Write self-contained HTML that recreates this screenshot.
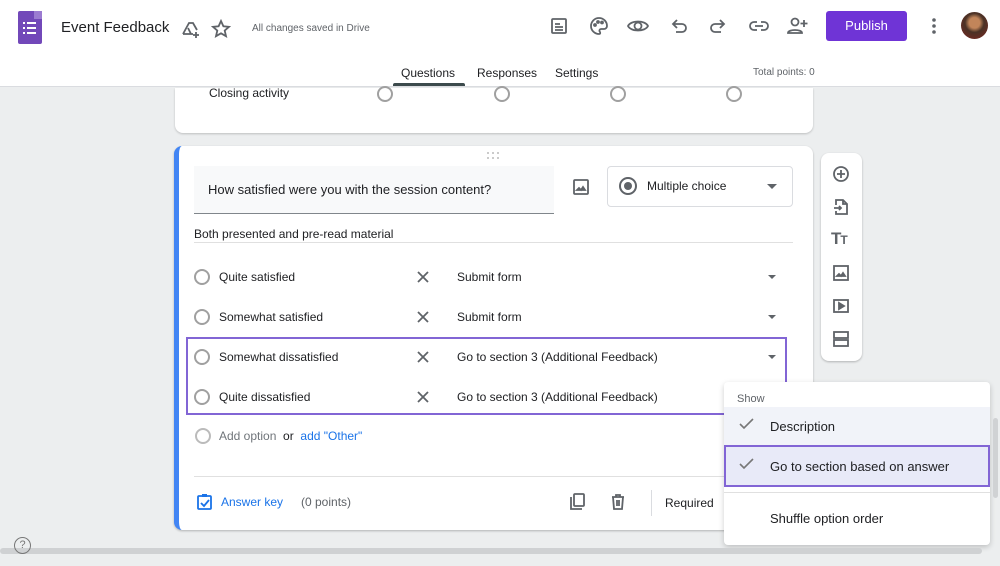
<!DOCTYPE html>
<html><head><meta charset="utf-8"><style>
*{box-sizing:border-box;margin:0;padding:0}
body{width:1000px;height:566px;overflow:hidden;background:#eceeef;font-family:"Liberation Sans",Arial,sans-serif;color:#202124;position:relative;font-size:13px}
.abs{position:absolute}
.radio{position:absolute;width:16px;height:16px;border:2px solid #a0a0a0;border-radius:50%}
svg{position:absolute}
.ic{fill:none;stroke:#5f6368;stroke-width:1.8}
</style></head><body>
<div class="abs" style="left:0;top:0;width:1000px;height:87px;background:#fff;border-bottom:1px solid #dadce0"></div>
<div class="abs" style="left:18px;top:11px;width:24px;height:33px;background:#7248b9;border-radius:2px"></div>
<div class="abs" style="left:34px;top:11px;width:8px;height:8px;background:#9b7bd1"></div>
<svg style="left:22px;top:21px" width="16" height="14"><g fill="#fff"><rect x="1" y="1" width="2" height="2"/><rect x="5" y="1" width="9" height="2"/><rect x="1" y="6" width="2" height="2"/><rect x="5" y="6" width="9" height="2"/><rect x="1" y="11" width="2" height="2"/><rect x="5" y="11" width="9" height="2"/></g></svg>
<div class="abs" style="left:61px;top:19px;font-size:15px">Event Feedback</div>
<svg style="left:180px;top:19px" width="22" height="20" class="ic"><path d="M3 15 L9 4 L13 4 L17 11 M3 15 L13 15 M8 9 L11 15"/><path d="M16 13v6M13 16h6"/></svg>
<svg style="left:211px;top:19px" width="20" height="20" class="ic"><path d="M10 2l2.4 5.3 5.6.5-4.3 3.8 1.3 5.6L10 14.3 5 17.2l1.3-5.6L2 7.8l5.6-.5z"/></svg>
<div class="abs" style="left:252px;top:23px;font-size:10px;color:#5f6368">All changes saved in Drive</div>
<svg style="left:549px;top:16px" width="20" height="20" class="ic"><rect x="3" y="3" width="14" height="14" rx="1"/><path d="M6 8h5M6 11h8M6 14h8"/></svg>
<svg style="left:589px;top:16px" width="20" height="20" class="ic"><path d="M10 2a8 8 0 1 0 0 16c1.5 0 1.5-1.5.7-2.5-.7-1 0-2.5 1.3-2.5H15a3 3 0 0 0 3-3c0-4.5-3.6-8-8-8z"/><circle cx="6" cy="9" r="1"/><circle cx="9" cy="6" r="1"/><circle cx="13" cy="6.5" r="1"/></svg>
<svg style="left:627px;top:16px" width="22" height="20" class="ic"><path d="M1 10c3-6 17-6 20 0-3 6-17 6-20 0z"/><circle cx="11" cy="10" r="3.5"/></svg>
<svg style="left:669px;top:16px" width="20" height="20" class="ic"><path d="M5 8h8a4 4 0 0 1 0 8H7M8 4L4 8l4 4"/></svg>
<svg style="left:708px;top:16px" width="20" height="20" class="ic"><path d="M15 8H7a4 4 0 0 0 0 8h6M12 4l4 4-4 4"/></svg>
<svg style="left:748px;top:16px" width="22" height="20" class="ic"><path d="M9 6H6a4 4 0 0 0 0 8h3M13 6h3a4 4 0 0 1 0 8h-3M7 10h8"/></svg>
<svg style="left:787px;top:16px" width="22" height="20" class="ic"><circle cx="8" cy="6" r="3.5"/><path d="M1 17c0-4 14-4 14 0zM17 4v7M13.5 7.5h7"/></svg>
<div class="abs" style="left:826px;top:11px;width:81px;height:30px;background:#6f34d6;border-radius:3px;color:#fff;font-size:13px;text-align:center;line-height:30px">Publish</div>
<svg style="left:928px;top:16px" width="12" height="20"><g fill="#5f6368"><circle cx="6" cy="4" r="1.8"/><circle cx="6" cy="10" r="1.8"/><circle cx="6" cy="16" r="1.8"/></g></svg>
<div class="abs" style="left:961px;top:12px;width:27px;height:27px;border-radius:50%;background:radial-gradient(circle at 50% 40%,#c2855a 0 25%,#4a3226 45%,#6b2a22 80%)"></div>
<div class="abs" style="left:401px;top:66px;font-size:12px">Questions</div>
<div class="abs" style="left:393px;top:83px;width:72px;height:3px;background:#3c4a4c;border-radius:2px 2px 0 0"></div>
<div class="abs" style="left:477px;top:66px;font-size:12px">Responses</div>
<div class="abs" style="left:555px;top:66px;font-size:12px">Settings</div>
<div class="abs" style="left:753px;top:67px;font-size:10px;color:#5f6368">Total points: 0</div>
<div class="abs" style="left:175px;top:88px;width:638px;height:45px;background:#fff;border-radius:0 0 8px 8px;box-shadow:0 1px 2px rgba(0,0,0,.2)"></div>
<div class="abs" style="left:209px;top:86px;font-size:12px">Closing activity</div>
<div class="radio" style="left:377px;top:86px"></div>
<div class="radio" style="left:494px;top:86px"></div>
<div class="radio" style="left:610px;top:86px"></div>
<div class="radio" style="left:726px;top:86px"></div>
<div class="abs" style="left:174px;top:146px;width:639px;height:384px;background:#fff;border-radius:8px;border-left:5px solid #4285f4;box-shadow:0 1px 2px rgba(0,0,0,.25)"></div>
<svg style="left:486px;top:151px" width="16" height="10"><g fill="#bbb"><circle cx="2" cy="2" r="1"/><circle cx="7" cy="2" r="1"/><circle cx="12" cy="2" r="1"/><circle cx="2" cy="7" r="1"/><circle cx="7" cy="7" r="1"/><circle cx="12" cy="7" r="1"/></g></svg>
<div class="abs" style="left:194px;top:166px;width:360px;height:48px;background:#f8f9fa;border-bottom:1px solid #80868b"></div>
<div class="abs" style="left:208px;top:182px;font-size:13px">How satisfied were you with the session content?</div>
<svg style="left:572px;top:178px" width="18" height="18" class="ic"><rect x="2" y="2" width="14" height="14" rx="1"/><path d="M5 12l2-2 2 2 2-3 2 3z" fill="#5f6368"/></svg>
<div class="abs" style="left:607px;top:166px;width:186px;height:41px;border:1px solid #dadce0;border-radius:4px"></div>
<div class="abs" style="left:619px;top:177px;width:18px;height:18px;border:2px solid #5f6368;border-radius:50%"></div>
<div class="abs" style="left:624px;top:182px;width:8px;height:8px;background:#5f6368;border-radius:50%"></div>
<div class="abs" style="left:647px;top:179px;font-size:12px">Multiple choice</div>
<div class="abs" style="left:767px;top:184px;border:5px solid transparent;border-top-color:#5f6368;border-bottom:0"></div>
<div class="abs" style="left:194px;top:227px;font-size:12px">Both presented and pre-read material</div>
<div class="abs" style="left:194px;top:242px;width:599px;height:1px;background:#e0e0e0"></div>
<div class="abs" style="left:186px;top:337px;width:601px;height:78px;border:2px solid #8265d5"></div>
<div class="radio" style="left:194px;top:269px"></div><div class="abs" style="left:219px;top:270px;font-size:12px">Quite satisfied</div>
<div class="radio" style="left:194px;top:309px"></div><div class="abs" style="left:219px;top:310px;font-size:12px">Somewhat satisfied</div>
<div class="radio" style="left:194px;top:349px"></div><div class="abs" style="left:219px;top:350px;font-size:12px">Somewhat dissatisfied</div>
<div class="radio" style="left:194px;top:389px"></div><div class="abs" style="left:219px;top:390px;font-size:12px">Quite dissatisfied</div>
<svg style="left:416px;top:270px" width="14" height="14"><path d="M2 2l10 10M12 2L2 12" stroke="#5f6368" stroke-width="1.8"/></svg>
<svg style="left:416px;top:310px" width="14" height="14"><path d="M2 2l10 10M12 2L2 12" stroke="#5f6368" stroke-width="1.8"/></svg>
<svg style="left:416px;top:350px" width="14" height="14"><path d="M2 2l10 10M12 2L2 12" stroke="#5f6368" stroke-width="1.8"/></svg>
<svg style="left:416px;top:390px" width="14" height="14"><path d="M2 2l10 10M12 2L2 12" stroke="#5f6368" stroke-width="1.8"/></svg>
<div class="abs" style="left:457px;top:270px;font-size:12px">Submit form</div>
<div class="abs" style="left:457px;top:310px;font-size:12px">Submit form</div>
<div class="abs" style="left:457px;top:350px;font-size:12px">Go to section 3 (Additional Feedback)</div>
<div class="abs" style="left:457px;top:390px;font-size:12px">Go to section 3 (Additional Feedback)</div>
<div class="abs" style="left:768px;top:275px;border:4px solid transparent;border-top-color:#5f6368;border-bottom:0"></div>
<div class="abs" style="left:768px;top:315px;border:4px solid transparent;border-top-color:#5f6368;border-bottom:0"></div>
<div class="abs" style="left:768px;top:355px;border:4px solid transparent;border-top-color:#5f6368;border-bottom:0"></div>
<div class="radio" style="left:195px;top:428px;border-color:#bbb"></div>
<div class="abs" style="left:219px;top:429px;font-size:12px;color:#70757a">Add option <span style="color:#202124">&nbsp;or&nbsp;</span> <span style="color:#1a73e8">add "Other"</span></div>
<div class="abs" style="left:194px;top:476px;width:599px;height:1px;background:#e0e0e0"></div>
<svg style="left:196px;top:493px" width="18" height="18"><rect x="2" y="3" width="13" height="13" rx="1" fill="none" stroke="#1a73e8" stroke-width="1.8"/><rect x="6" y="1" width="5" height="3" fill="#1a73e8"/><path d="M5 10l3 3 5-6" fill="none" stroke="#1a73e8" stroke-width="1.8"/></svg>
<div class="abs" style="left:221px;top:495px;font-size:12px;color:#1a73e8">Answer key</div>
<div class="abs" style="left:301px;top:495px;font-size:12px;color:#5f6368">(0 points)</div>
<svg style="left:568px;top:492px" width="18" height="20" class="ic"><path d="M3 5v12h11"/><rect x="6" y="2" width="10" height="12" rx="1"/></svg>
<svg style="left:609px;top:492px" width="18" height="20" class="ic"><path d="M3 5h12M7 5V3h4v2M4 5l1 12h8l1-12M8 8v6M10 8v6"/></svg>
<div class="abs" style="left:651px;top:490px;width:1px;height:26px;background:#dadce0"></div>
<div class="abs" style="left:665px;top:496px;font-size:12px">Required</div>
<div class="abs" style="left:821px;top:153px;width:41px;height:208px;background:#fff;border-radius:8px;box-shadow:0 1px 2px rgba(0,0,0,.25)"></div>
<svg style="left:832px;top:165px" width="18" height="18" class="ic"><circle cx="9" cy="9" r="7"/><path d="M9 5v8M5 9h8"/></svg>
<svg style="left:832px;top:198px" width="18" height="18" class="ic"><path d="M4 7V2h7l4 4v10H4v-3M11 2v4h4M2 10h7M7 8l2 2-2 2"/></svg>
<div class="abs" style="left:831px;top:229px;font-size:17px;font-weight:bold;color:#5f6368;letter-spacing:-1px">T<span style="font-size:12px">T</span></div>
<svg style="left:832px;top:264px" width="18" height="18" class="ic"><rect x="2" y="2" width="14" height="14"/><path d="M5 12l2-2 2 2 2-3 2 3z" fill="#5f6368"/></svg>
<svg style="left:832px;top:297px" width="18" height="18" class="ic"><rect x="2" y="3" width="14" height="12"/><path d="M7 6v6l5-3z" fill="#5f6368"/></svg>
<svg style="left:832px;top:330px" width="18" height="18" class="ic"><rect x="2" y="2" width="14" height="6"/><rect x="2" y="10" width="14" height="6"/></svg>
<div class="abs" style="left:724px;top:382px;width:266px;height:163px;background:#fff;border-radius:4px;box-shadow:0 2px 6px rgba(0,0,0,.2)"></div>
<div class="abs" style="left:737px;top:393px;font-size:11px;color:#5f6368">Show</div>
<div class="abs" style="left:724px;top:407px;width:266px;height:38px;background:#f1f3f9"></div>
<div class="abs" style="left:724px;top:445px;width:266px;height:42px;background:#e8eaf8;border:2px solid #8265d5"></div>
<svg style="left:738px;top:417px" width="18" height="14"><path d="M2 7l4 4 9-9" fill="none" stroke="#777" stroke-width="1.6"/></svg>
<svg style="left:738px;top:457px" width="18" height="14"><path d="M2 7l4 4 9-9" fill="none" stroke="#777" stroke-width="1.6"/></svg>
<div class="abs" style="left:770px;top:419px;font-size:13px">Description</div>
<div class="abs" style="left:770px;top:459px;font-size:13px">Go to section based on answer</div>
<div class="abs" style="left:724px;top:492px;width:266px;height:1px;background:#e0e0e0"></div>
<div class="abs" style="left:770px;top:511px;font-size:13px">Shuffle option order</div>
<div class="abs" style="left:993px;top:418px;width:5px;height:80px;background:#d0d2d4;border-radius:3px"></div>
<div class="abs" style="left:0;top:548px;width:982px;height:6px;background:#cfd1d3;border-radius:3px"></div>
<div class="abs" style="left:14px;top:537px;width:17px;height:17px;border:1.5px solid #777;border-radius:50%;font-size:11px;text-align:center;line-height:14px;color:#777">?</div>
</body></html>
